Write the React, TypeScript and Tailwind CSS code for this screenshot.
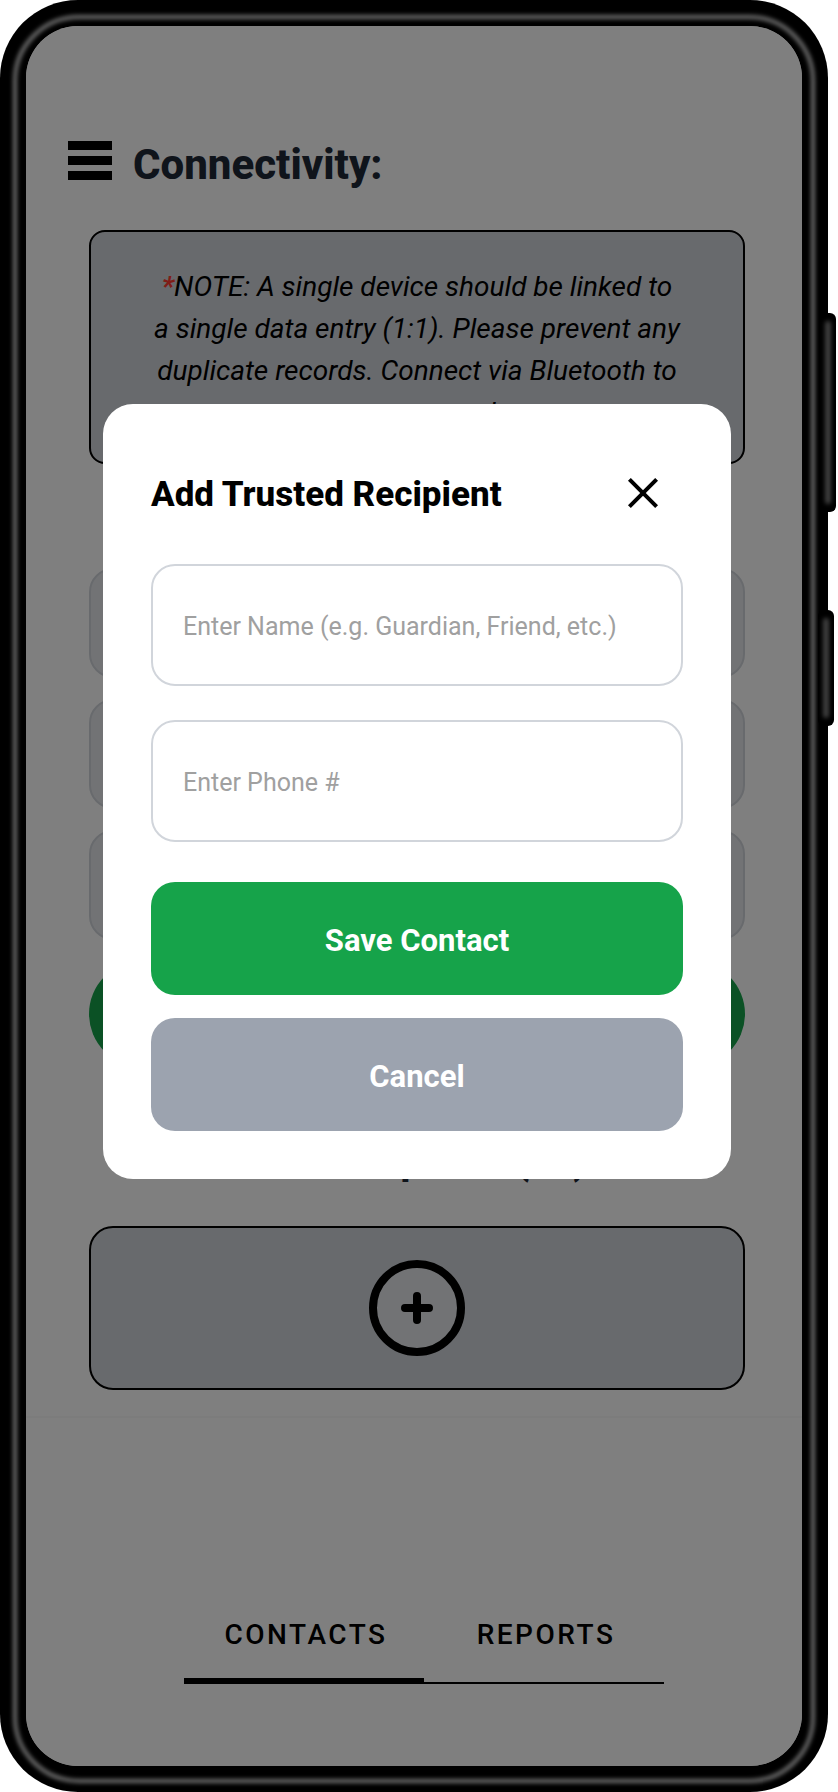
import React from "react";

const deviceFields = ["Device name", "Device address", "Owner"];

function MenuIcon() {
  return (
    <svg width="44" height="41" viewBox="0 0 44 41" aria-hidden="true">
      <rect y="1" width="44" height="9" />
      <rect y="16" width="44" height="9" />
      <rect y="31" width="44" height="9" />
    </svg>
  );
}

function CloseIcon() {
  return (
    <svg width="32" height="32" viewBox="0 0 32 32" stroke="#000" strokeWidth="4" aria-hidden="true">
      <path d="M2.4 1.4 29.6 28.6M29.6 1.4 2.4 28.6" />
    </svg>
  );
}

function PlusCircleIcon() {
  return (
    <svg
      width="96"
      height="96"
      viewBox="0 0 96 96"
      stroke="#000"
      strokeWidth="8"
      strokeLinecap="round"
      aria-hidden="true"
    >
      <circle cx="48" cy="48" r="44" fill="#e5e7eb" />
      <path d="M48 36v24M36 48h24" />
    </svg>
  );
}

function SideKey({ className }: { className: string }) {
  return (
    <div className={`absolute w-4 overflow-hidden rounded-[6px] bg-black ${className}`}>
      <div className="absolute inset-x-[5px] inset-y-[8px] rounded-[3px] bg-[#404040] blur-[2px]" />
    </div>
  );
}

function ContactField({ id, label, type }: { id: string; label: string; type: string }) {
  return (
    <div>
      <label htmlFor={id} className="sr-only">
        {label}
      </label>
      <input
        id={id}
        type={type}
        placeholder={label}
        className="block h-[122px] w-full rounded-3xl border-2 border-[#d1d5db] bg-white px-[30px] pt-0.5 text-[25px] text-black placeholder:text-[#a0a0a0]"
      />
    </div>
  );
}

function AddRecipientDialog() {
  return (
    <div className="absolute inset-0 bg-black/50 pt-[378px] pr-[71px] pl-[77px]">
      <form
        role="dialog"
        aria-labelledby="dialog-title"
        className="rounded-[30px] bg-white px-12 pt-[68px] pb-12"
        onSubmit={(event) => event.preventDefault()}
      >
        <div className="flex items-start justify-between pr-6">
          <h2 id="dialog-title" className="text-[35px] leading-[46px] font-extrabold text-black">
            Add Trusted Recipient
          </h2>
          <button type="button" aria-label="Close" className="pt-1.5">
            <CloseIcon />
          </button>
        </div>
        <div className="mt-[46px] flex flex-col gap-[34px]">
          <ContactField id="contact-name" label="Enter Name (e.g. Guardian, Friend, etc.)" type="text" />
          <ContactField id="contact-phone" label="Enter Phone #" type="tel" />
        </div>
        <div className="mt-10 flex flex-col gap-[23px]">
          <button type="submit" className="h-[113px] rounded-3xl bg-[#16a34a] pt-1.5 text-[31px] font-bold text-white">
            Save Contact
          </button>
          <button type="button" className="h-[113px] rounded-3xl bg-[#9ca3af] pt-1.5 text-[31px] font-bold text-white">
            Cancel
          </button>
        </div>
      </form>
    </div>
  );
}

export default function App() {
  return (
    <div className="min-h-screen bg-white pr-[10px] font-['Roboto',sans-serif]">
      <div className="relative rounded-[78px] bg-black p-[26px]">
        <div className="pointer-events-none absolute inset-x-[13px] top-[15px] bottom-[9px] rounded-[66px] border-4 border-[#6e6e6e] blur-[2px]" />
        <SideKey className="top-[313px] -right-2 h-[199px]" />
        <SideKey className="top-[610px] -right-1.5 h-[116px]" />

        <div className="relative overflow-hidden rounded-[52px] bg-white">
          <header className="flex items-start gap-[21px] pt-[114px] pl-[42px]">
            <button type="button" aria-label="Menu">
              <MenuIcon />
            </button>
            <h1 className="text-[42px] leading-[50px] font-extrabold text-[#1f2937]">Connectivity:</h1>
          </header>

          <main className="flex flex-col pr-[57px] pl-[63px]">
            <p className="mt-10 rounded-2xl border-2 border-black bg-[#d1d5db] pt-[34px] pb-7 text-center text-[28px] leading-[42px] text-black italic">
              <span className="font-bold text-[#ff3b30]">*</span>NOTE: A single device should be linked to
              <br />
              a single data entry (1:1). Please prevent any
              <br />
              duplicate records. Connect via Bluetooth to
              <br />
              ensure accuracy here.
            </p>

            <div className="mt-[104px] flex flex-col gap-[21px]">
              {deviceFields.map((field) => (
                <input
                  key={field}
                  type="text"
                  aria-label={field}
                  className="h-[110px] rounded-3xl border-2 border-[#d1d5db] bg-[#e5e7eb] px-8 text-[25px]"
                />
              ))}
            </div>
            <button type="button" className="mt-[21px] h-[106px] rounded-full bg-[#16a34a] text-[31px] font-bold text-white">
              Connect
            </button>

            <h2 className="mt-[70px] text-center text-[38px] leading-[48px] font-extrabold text-[#1f2937]">
              Add Recipients (10)
            </h2>
            <button
              type="button"
              aria-label="Add recipient"
              className="mt-[41px] flex h-[164px] items-center justify-center rounded-3xl border-2 border-black bg-[#d1d5db]"
            >
              <PlusCircleIcon />
            </button>
          </main>

          <nav className="mt-[26px] flex border-t-2 border-[#f8f8f8] pt-[196px] pr-[138px] pb-[82px] pl-[158px] text-[28px] leading-[42px] font-medium tracking-[0.09em] text-black">
            <a href="#contacts" className="flex-1 border-b-6 border-black pb-[22px] pl-1 text-center">
              CONTACTS
            </a>
            <a href="#reports" className="flex-1 border-b-2 border-black pb-[26px] pl-1 text-center">
              REPORTS
            </a>
          </nav>

          <AddRecipientDialog />
        </div>
      </div>
    </div>
  );
}
